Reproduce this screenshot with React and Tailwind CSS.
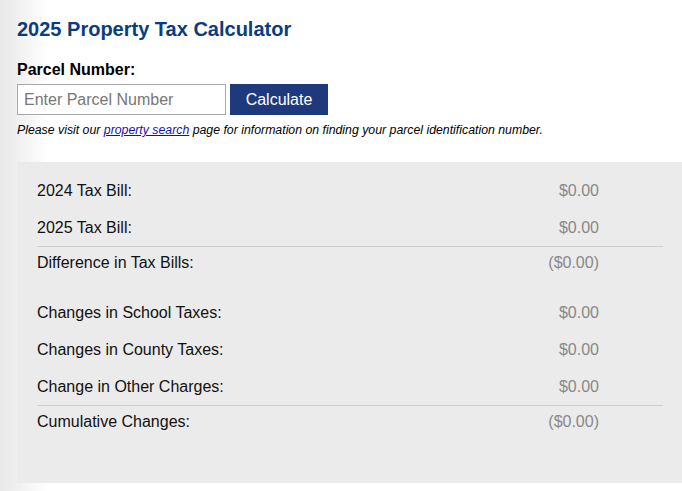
export default function App() {

  const rows = [
    { label: "2024 Tax Bill:", value: "$0.00" },
    { label: "2025 Tax Bill:", value: "$0.00", line: true },
    { label: "Difference in Tax Bills:", value: "($0.00)", short: true, gap: true },
    { label: "Changes in School Taxes:", value: "$0.00" },
    { label: "Changes in County Taxes:", value: "$0.00" },
    { label: "Change in Other Charges:", value: "$0.00", line: true },
    { label: "Cumulative Changes:", value: "($0.00)", short: true }
  ];

  return (

    <div
      className="h-[491px] w-full overflow-hidden bg-[linear-gradient(to_right,#e8e8e8,#ffffff_48px)] pl-[17px] pt-[16px] text-black"
      style={{ fontFamily: '"Liberation Sans", Arial, sans-serif' }}
    >

      {/* Title */}

      <h1 className="text-[20px] font-bold leading-[26px] text-[#0b3c7f]">
        2025 Property Tax Calculator
      </h1>

      <div className="mt-[18px] text-[16px] font-bold leading-[20px]">
        Parcel Number:
      </div>

      {/* Parcel input */}

      <div className="mt-[4px] flex gap-[4px]">

        <input
          type="text"
          placeholder="Enter Parcel Number"
          className="h-[31px] w-[209px] border border-[#a9a9a9] bg-white px-[6px] text-[16px] outline-none placeholder-[#777]"
        />

        <button className="h-[31px] w-[98px] bg-[#1e3a7d] text-[16px] text-white">
          Calculate
        </button>

      </div>

      <p className="mt-[8px] text-[12.3px] italic leading-[14px]">
        Please visit our <a href="#" className="text-[#1a0dab] underline">property search</a> page for information on finding your parcel identification number.
      </p>

      {/* Results panel */}

      <div className="mt-[25px] h-[321px] bg-[#ebebeb] pl-[20px] pr-[19px] pt-[10px] text-[16px]">

        {rows.map((row) => (

          <div key={row.label} className={row.gap ? "mb-[15px]" : ""}>

            <div className={`flex items-center justify-between pr-[64px] ${row.short ? "h-[32px]" : "h-[37px]"}`}>
              <span className="text-[#111]">{row.label}</span>
              <span className="text-[#888]">{row.value}</span>
            </div>

            {row.line && <div className="h-px bg-[#cfcfcf]"></div>}

          </div>

        ))}

      </div>

    </div>

  );

}
